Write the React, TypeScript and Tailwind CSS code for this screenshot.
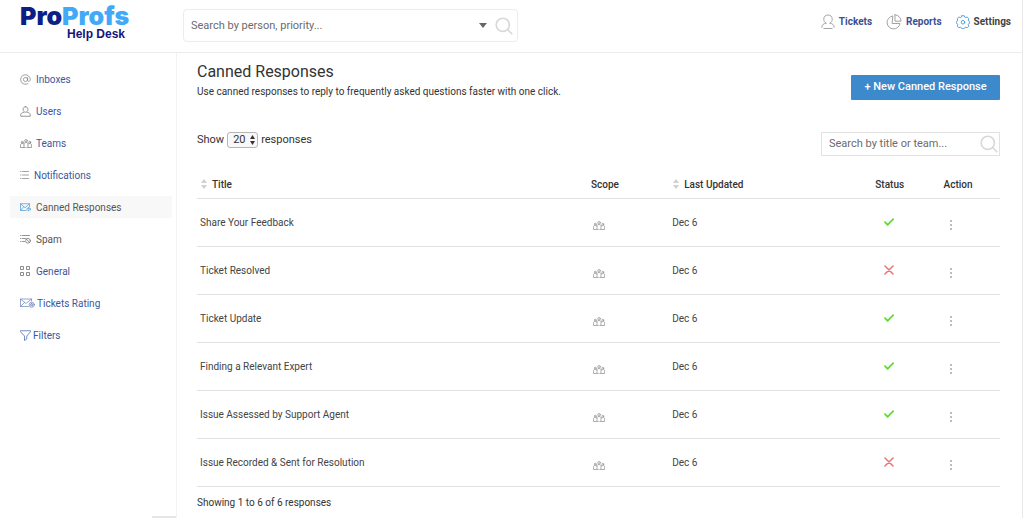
import React from "react";

type IconProps = { className?: string };

const stroke = {
  fill: "none",
  stroke: "currentColor",
  strokeLinecap: "round" as const,
  strokeLinejoin: "round" as const,
};

function AtIcon({ className }: IconProps) {
  return (
    <svg className={className} width="11" height="11" viewBox="0 0 22 22" {...stroke} strokeWidth="1.6" aria-hidden="true">
      <circle cx="11" cy="11" r="4.2" />
      <path d="M15.2 7v5.4c0 3.8 5.3 3.2 5.3-1.6A9.6 9.6 0 1 0 16 19.2" />
    </svg>
  );
}

function UserIcon({ className }: IconProps) {
  return (
    <svg className={className} width="11" height="11" viewBox="0 0 22 22" {...stroke} strokeWidth="1.8" aria-hidden="true">
      <path d="M11 1.5c-3 0-4.8 2-4.8 5s1.9 5.9 4.8 5.9 4.8-2.9 4.8-5.9-1.8-5-4.8-5Z" />
      <path d="M7.5 12.5c-3.5.6-6 2.4-6 5v3h19v-3c0-2.600-2.500-4.400-6-5" />
    </svg>
  );
}

function TeamIcon({ className }: IconProps) {
  return (
    <svg className={className} width="12" height="9" viewBox="0 0 24 18" {...stroke} strokeWidth="1.6" aria-hidden="true">
      <circle cx="12" cy="3.6" r="2.6" />
      <circle cx="4.5" cy="6.5" r="2" />
      <circle cx="19.5" cy="6.5" r="2" />
      <path d="M8 17v-6c0-3 1.500-4 4-4s4 1 4 4v6ZM8 17H1v-4.500c0-2.500 1.200-3.500 3.500-3.500 1.500 0 2.500.3 3.200 1.200M16 17h7v-4.500c0-2.500-1.200-3.500-3.500-3.500-1.500 0-2.500.3-3.200 1.200" />
    </svg>
  );
}

function ListIcon({ className }: IconProps) {
  return (
    <svg className={className} width="9" height="10" viewBox="0 0 18 20" {...stroke} strokeWidth="1.6" aria-hidden="true">
      <path d="M1 3h1M1 10h1M1 17h1M5 3h12M5 10h12M5 17h12" />
    </svg>
  );
}

function CannedIcon({ className }: IconProps) {
  return (
    <svg className={className} width="11" height="9" viewBox="0 0 22 18" {...stroke} strokeWidth="1.6" aria-hidden="true">
      <path d="M12 15H1V1.500h18V8M1 1.500l9 8 9-8M1 15l6-7" />
      <path d="m17 9-4 3.500 4 3.500v-2.200h4v-2.600h-4Z" />
    </svg>
  );
}

function SpamIcon({ className }: IconProps) {
  return (
    <svg className={className} width="11" height="10" viewBox="0 0 22 20" {...stroke} strokeWidth="1.6" aria-hidden="true">
      <path d="M1 3h1M1 9h1M1 15h1M5 3h14M5 9h6M5 15h4" />
      <circle cx="16" cy="13.5" r="4.8" />
      <path d="m12.600 10.200 6.800 6.600" />
    </svg>
  );
}

function GridIcon({ className }: IconProps) {
  return (
    <svg className={className} width="11" height="11" viewBox="0 0 11 11" fill="none" stroke="currentColor" aria-hidden="true">
      <path d="M.5.5h3v3h-3zM6.500.5h3v3h-3zM.5 6.500h3v3h-3zM6.500 6.500h3v3h-3z" />
    </svg>
  );
}

function RatingIcon({ className }: IconProps) {
  return (
    <svg className={className} width="15" height="10" viewBox="0 0 30 20" {...stroke} strokeWidth="1.3" aria-hidden="true">
      <path d="M17 17H1V2h22v4M1 2l11 9L23 2M1 17l8-8" />
      <circle cx="23.5" cy="13.5" r="5.2" />
      <path d="m23.500 10.500 1 2h2l-1.500 1.600.5 2.200-2-1.100-2 1.100.5-2.200-1.500-1.600h2Z" />
    </svg>
  );
}

function FilterIcon({ className }: IconProps) {
  return (
    <svg className={className} width="11" height="11" viewBox="0 0 22 22" {...stroke} strokeWidth="1.7" aria-hidden="true">
      <path d="M1 1.500h20v2L13.500 12v6L9 21v-9L1 3.500Z" />
    </svg>
  );
}

function SearchIcon({ className }: IconProps) {
  return (
    <svg className={className} width="18" height="18" viewBox="0 0 18 18" {...stroke} strokeWidth="1.6" aria-hidden="true">
      <circle cx="7.8" cy="7.8" r="6.6" />
      <path d="m12.500 12.500 4.300 4.300" />
    </svg>
  );
}

function TicketsIcon() {
  return (
    <svg className="text-[#a3a3a3]" width="14" height="16" viewBox="0 0 14 16" {...stroke} aria-hidden="true">
      <path d="M5 9.200C3.300 8.400 2.800 6.800 2.800 5.200 2.800 2.500 4.500 1 7 1s4.200 1.500 4.200 4.200c0 1.600-.5 3.200-2.200 4M5 9.200c-2.500.5-4.200 1.500-4.200 4M9 9.200c2.500.5 4.200 1.500 4.200 4M2.800 14.500h8.400" />
    </svg>
  );
}

function ReportsIcon() {
  return (
    <svg className="text-[#a3a3a3]" width="16" height="16" viewBox="0 0 16 16" {...stroke} aria-hidden="true">
      <path d="M6.500 2A6.500 6.500 0 1 0 14 9.500H6.500Z" />
      <path d="M9 .8V7.200h6A6.200 6.200 0 0 0 9 .8Z" />
    </svg>
  );
}

function SettingsIcon() {
  return (
    <svg className="text-[#5aa3dd]" width="14" height="14" viewBox="0 0 28 28" {...stroke} strokeWidth="2" aria-hidden="true">
      <path d="M11.500 1.500h5l1 2.800 2 .9 2.800-1.200 3.300 3.300-1.200 2.800.9 2 2.200 1v3.300l-2.200 1-.9 2 1.200 2.800-3.300 3.300-2.800-1.200-2 .9-1 2.300h-5l-1-2.300-2-.9-2.800 1.200-3.300-3.300 1.200-2.800-.9-2-2.200-1v-3.300l2.200-1 .9-2L2.400 7.300 5.700 4l2.800 1.200 2-.9Z" />
      <circle cx="14" cy="14.5" r="3.6" />
    </svg>
  );
}

function SortIcon() {
  return (
    <svg width="6" height="10" viewBox="0 0 6 10" fill="#cfcfcf" aria-hidden="true">
      <path d="M3 0 6 4H0ZM3 10 0 6h6Z" />
    </svg>
  );
}

function StatusIcon({ active }: { active: boolean }) {
  return active ? (
    <svg width="10" height="8" viewBox="0 0 10 8" {...stroke} stroke="#5fd836" strokeWidth="1.7" role="img" aria-label="Active">
      <path d="M1 4.200 3.600 6.800 9.200 1.200" />
    </svg>
  ) : (
    <svg width="10" height="10" viewBox="0 0 10 10" {...stroke} stroke="#f0706c" strokeWidth="1.5" role="img" aria-label="Inactive">
      <path d="m1 1 8 8M9 1 1 9" />
    </svg>
  );
}

const menu = [
  { label: "Inboxes", Icon: AtIcon, gap: "gap-[5px]", icon: "text-[#8a8a8a]", text: "text-[#3b579d]" },
  { label: "Users", Icon: UserIcon, gap: "gap-[5px]", icon: "text-[#8a8a8a]", text: "text-[#3b579d]" },
  { label: "Teams", Icon: TeamIcon, gap: "gap-1", icon: "text-[#8a8a8a]", text: "text-[#3b579d]" },
  { label: "Notifications", Icon: ListIcon, gap: "gap-[5px]", icon: "text-[#8a8a8a]", text: "text-[#3b579d]" },
  { label: "Canned Responses", Icon: CannedIcon, gap: "gap-[5px]", icon: "text-[#5aa3dd]", text: "text-[#555]", current: true },
  { label: "Spam", Icon: SpamIcon, gap: "gap-[5px]", icon: "text-[#777]", text: "text-[#555]" },
  { label: "General", Icon: GridIcon, gap: "gap-[5px]", icon: "text-[#8a8a8a]", text: "text-[#3b579d]" },
  { label: "Tickets Rating", Icon: RatingIcon, gap: "gap-0.5", icon: "text-[#5f78b3]", text: "text-[#3b579d]" },
  { label: "Filters", Icon: FilterIcon, gap: "gap-0.5", icon: "text-[#5f78b3]", text: "text-[#3b579d]" },
];

const responses = [
  { title: "Share Your Feedback", updated: "Dec 6", active: true },
  { title: "Ticket Resolved", updated: "Dec 6", active: false },
  { title: "Ticket Update", updated: "Dec 6", active: true },
  { title: "Finding a Relevant Expert", updated: "Dec 6", active: true },
  { title: "Issue Assessed by Support Agent", updated: "Dec 6", active: true },
  { title: "Issue Recorded & Sent for Resolution", updated: "Dec 6", active: false },
];

function Header() {
  return (
    <header className="flex h-[53px] items-start border-b border-[#ececec]">
      <a href="#" className="flex w-[183px] shrink-0 flex-col pl-5 pt-1">
        <span className="font-['Inter',sans-serif] text-[25px] font-black leading-6 text-[#0b1f85]">
          Pro<span className="text-[#42a9f8]">Profs</span>
        </span>
        <span className="pl-[47px] font-['Liberation_Sans',sans-serif] text-xs font-bold leading-3 text-[#14147e]">
          Help Desk
        </span>
      </a>

      <div className="mt-[9px] flex h-[33px] w-[335px] items-center rounded-sm border border-[#ececec] pl-[7px] pr-1">
        <input
          type="text"
          aria-label="Search tickets"
          placeholder="Search by person, priority..."
          className="min-w-0 flex-1 pt-0.5 text-[11px] outline-none placeholder:text-[#6b6b6b]"
        />
        <button type="button" aria-label="Search options" className="mr-2">
          <svg width="8" height="5" viewBox="0 0 8 5" fill="#666" aria-hidden="true">
            <path d="M0 0h8L4 5Z" />
          </svg>
        </button>
        <button type="button" aria-label="Search">
          <SearchIcon className="text-[#d8d8d8]" />
        </button>
      </div>

      <nav className="ml-auto flex h-[43px] items-center gap-3.5 pr-[11px] text-[10px] font-bold text-[#3b4f94]">
        <a href="#" className="flex items-center gap-1">
          <TicketsIcon />
          Tickets
        </a>
        <a href="#" className="flex items-center gap-1">
          <ReportsIcon />
          Reports
        </a>
        <a href="#" className="flex items-center gap-1 text-[#444]">
          <SettingsIcon />
          Settings
        </a>
      </nav>
    </header>
  );
}

function Sidebar() {
  return (
    <aside className="flex w-[177px] shrink-0 flex-col border-r border-[#f3f3f3]">
      <nav className="flex flex-col gap-[10px] pl-[10px] pr-1 pt-[15px]">
        {menu.map(({ label, Icon, gap, icon, text, current }) => (
          <a
            key={label}
            href="#"
            aria-current={current ? "page" : undefined}
            className={`flex h-[22px] items-center pl-[10px] text-[10px] ${gap} ${text} ${current ? "bg-[#f8f8f8]" : ""}`}
          >
            <Icon className={icon} />
            {label}
          </a>
        ))}
      </nav>
      <div className="mt-auto h-0.5 w-6 self-end bg-[#e6e6e6]"></div>
    </aside>
  );
}

function ResponsesTable() {
  return (
    <table className="mt-[11px] w-full table-fixed text-left text-[10px] text-[#444]">
      <colgroup>
        <col className="w-[48.7%]" />
        <col className="w-[10.1%]" />
        <col className="w-[25.3%]" />
        <col className="w-[8.5%]" />
        <col className="w-[7.4%]" />
      </colgroup>
      <thead>
        <tr className="h-[31px] border-b border-[#e2e2e2] text-[#333]">
          <th className="pl-1 pt-1 font-medium">
            <button type="button" className="flex items-center gap-[5px]">
              <SortIcon />
              Title
            </button>
          </th>
          <th className="pl-[3px] pt-1 font-medium">Scope</th>
          <th className="pl-1 pt-1 font-medium">
            <button type="button" className="flex items-center gap-[5px]">
              <SortIcon />
              Last Updated
            </button>
          </th>
          <th className="pl-[3px] pt-1 font-medium">Status</th>
          <th className="pl-[3px] pt-1 font-medium">Action</th>
        </tr>
      </thead>
      <tbody>
        {responses.map((item) => (
          <tr key={item.title} className="h-12 border-b border-[#e2e2e2]">
            <td className="pl-[3px]">{item.title}</td>
            <td className="pl-[5px] pt-1.5">
              <TeamIcon className="text-[#999]" />
            </td>
            <td className="pl-[3px]">{item.updated}</td>
            <td className="pl-3">
              <StatusIcon active={item.active} />
            </td>
            <td className="pl-2 pt-1.5">
              <button type="button" aria-label={`Actions for ${item.title}`} className="block px-px">
                <svg width="3" height="11" viewBox="0 0 3 11" fill="#bdbdbd" aria-hidden="true">
                  <path d="M0 0h2v2H0zM0 4h2v2H0zM0 8h2v2H0z" />
                </svg>
              </button>
            </td>
          </tr>
        ))}
      </tbody>
    </table>
  );
}

export default function App() {
  return (
    <div className="flex h-screen flex-col overflow-hidden bg-white pr-px font-['Roboto',sans-serif]">
      <div className="flex min-h-0 flex-1 flex-col border-r border-[#e8e8e8]">
        <Header />
        <div className="flex min-h-0 flex-1">
          <Sidebar />
          <main className="min-w-0 flex-1 pl-5 pr-[22px] text-[11px] text-[#333]">
            <div className="flex items-start justify-between pt-[9px]">
              <div>
                <h1 className="text-base leading-5">Canned Responses</h1>
                <p className="text-[10px] leading-5">
                  Use canned responses to reply to frequently asked questions faster with one click.
                </p>
              </div>
              <button
                type="button"
                className="mt-[13px] h-[25px] w-[149px] rounded-[1px] bg-[#3c8acb] text-[11px] font-medium text-white"
              >
                + New Canned Response
              </button>
            </div>

            <div className="mt-[30px] flex items-start justify-between">
              <div className="flex h-4 items-center gap-[3px]">
                <label htmlFor="page-size">Show</label>
                <span className="relative flex">
                  <select
                    id="page-size"
                    defaultValue="20"
                    className="h-4 w-[31px] appearance-none rounded-[3px] border border-[#b5b5b5] bg-[#f8f8f8] pl-[5px] text-[11px] leading-3"
                  >
                    <option>20</option>
                    <option>50</option>
                    <option>100</option>
                  </select>
                  <svg className="pointer-events-none absolute right-[3px] top-[3px]" width="5" height="10" viewBox="0 0 5 10" fill="#333" aria-hidden="true">
                    <path d="M2.500 0 5 4H0ZM2.500 10 0 6h5Z" />
                  </svg>
                </span>
                <span>responses</span>
              </div>
              <div className="flex h-6 w-[179px] items-center border border-[#e2e2e2] pl-[7px] pr-px">
                <input
                  type="text"
                  aria-label="Search responses"
                  placeholder="Search by title or team..."
                  className="min-w-0 flex-1 text-[11px] outline-none placeholder:text-[#6b6b6b]"
                />
                <button type="button" aria-label="Search">
                  <SearchIcon className="text-[#d8d8d8]" />
                </button>
              </div>
            </div>

            <ResponsesTable />
            <p className="mt-2 text-[10px] leading-4">Showing 1 to 6 of 6 responses</p>
          </main>
        </div>
      </div>
    </div>
  );
}
